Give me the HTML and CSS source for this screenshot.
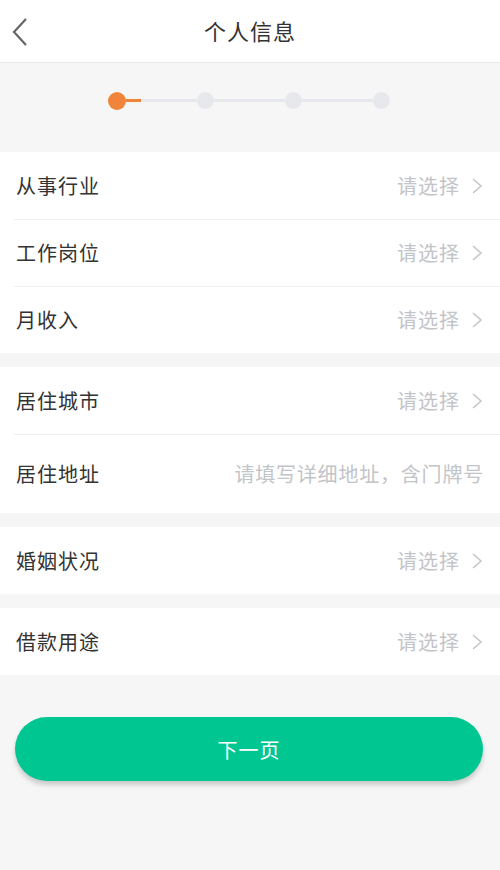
FILE: index.html
```html
<!DOCTYPE html>
<html lang="zh-CN">
<head>
<meta charset="utf-8">
<title>个人信息</title>
<link rel="stylesheet" href="styles.css">
</head>
<body>
<div class="page">
  <header class="topbar">
    <svg class="back" width="18" height="30" viewBox="0 0 18 30"><path d="M15 2 L3 15 L15 28" fill="none" stroke="#666" stroke-width="2.2"/></svg>
    <h1 class="title">个人信息</h1>
  </header>
  <div class="stepper">
    <div class="steps">
      <span class="dot active"></span>
      <span class="seg"><span class="seg-fill"></span></span>
      <span class="dot"></span>
      <span class="seg"></span>
      <span class="dot"></span>
      <span class="seg"></span>
      <span class="dot"></span>
    </div>
  </div>
  <section class="group">
    <div class="row"><span class="label">从事行业</span><span class="value">请选择<svg class="arrow" width="12" height="18" viewBox="0 0 12 18"><path d="M2 2 L10 9 L2 16" fill="none" stroke="#c4c6ca" stroke-width="1.6"/></svg></span></div>
    <div class="row"><span class="label">工作岗位</span><span class="value">请选择<svg class="arrow" width="12" height="18" viewBox="0 0 12 18"><path d="M2 2 L10 9 L2 16" fill="none" stroke="#c4c6ca" stroke-width="1.6"/></svg></span></div>
    <div class="row"><span class="label">月收入</span><span class="value">请选择<svg class="arrow" width="12" height="18" viewBox="0 0 12 18"><path d="M2 2 L10 9 L2 16" fill="none" stroke="#c4c6ca" stroke-width="1.6"/></svg></span></div>
  </section>
  <section class="group">
    <div class="row"><span class="label">居住城市</span><span class="value">请选择<svg class="arrow" width="12" height="18" viewBox="0 0 12 18"><path d="M2 2 L10 9 L2 16" fill="none" stroke="#c4c6ca" stroke-width="1.6"/></svg></span></div>
    <div class="row tall"><span class="label">居住地址</span><span class="value addr">请填写详细地址，含门牌号</span></div>
  </section>
  <section class="group">
    <div class="row"><span class="label">婚姻状况</span><span class="value">请选择<svg class="arrow" width="12" height="18" viewBox="0 0 12 18"><path d="M2 2 L10 9 L2 16" fill="none" stroke="#c4c6ca" stroke-width="1.6"/></svg></span></div>
  </section>
  <section class="group">
    <div class="row"><span class="label">借款用途</span><span class="value">请选择<svg class="arrow" width="12" height="18" viewBox="0 0 12 18"><path d="M2 2 L10 9 L2 16" fill="none" stroke="#c4c6ca" stroke-width="1.6"/></svg></span></div>
  </section>
  <div class="footer">
    <button class="next">下一页</button>
  </div>
</div>
</body>
</html>
```
FILE: styles.css
```css
* { box-sizing: border-box; }
html, body { margin: 0; padding: 0; }
body {
  width: 500px;
  height: 870px;
  background: #f6f6f6;
  font-family: "Noto Sans CJK SC", "Noto Sans", sans-serif;
  overflow: hidden;
}
.page {
  display: flex;
  flex-direction: column;
  height: 870px;
  background: #f6f6f6;
}
.topbar {
  height: 63px;
  background: #fff;
  border-bottom: 1px solid #e8e8e8;
  display: flex;
  align-items: center;
  justify-content: center;
  position: relative;
}
.back {
  position: absolute;
  left: 11px;
  top: 17px;
}
.title {
  margin: 0;
  font-size: 22px;
  font-weight: 400;
  color: #333;
  line-height: 1;
  letter-spacing: 1px;
  margin-top: -2px;
}
.stepper {
  height: 89px;
  display: flex;
  align-items: center;
  justify-content: center;
  padding-bottom: 14px;
}
.steps {
  display: flex;
  align-items: center;
  margin-left: -2px;
}
.dot {
  width: 17px;
  height: 17px;
  border-radius: 50%;
  background: #e6e8ec;
  flex: none;
}
.dot.active {
  width: 18px;
  height: 18px;
  background: #f0843a;
}
.seg {
  width: 71px;
  height: 3px;
  background: #e6e8ec;
  position: relative;
  flex: none;
}
.seg-fill {
  display: block;
  width: 15px;
  height: 3px;
  background: #f0843a;
}
.group {
  background: #fff;
  margin-bottom: 14px;
}
.row {
  height: 67px;
  display: flex;
  align-items: center;
  justify-content: space-between;
  padding: 0 17px 0 16px;
  position: relative;
}
.row + .row::before {
  content: "";
  position: absolute;
  left: 14px;
  right: 0;
  top: 0;
  height: 1px;
  background: #efefef;
}
.row.tall { height: 79px; }
.label {
  font-size: 20px;
  color: #333;
  letter-spacing: 1px;
}
.value {
  font-size: 20px;
  color: #c2c4c8;
  letter-spacing: 1px;
  display: flex;
  align-items: center;
  gap: 11px;
}
.value.addr {
  letter-spacing: 0.8px;
  margin-right: -1px;
}
.footer {
  flex: 1;
  padding: 28px 17px 0 15px;
}
.next {
  display: block;
  width: 100%;
  height: 64px;
  border: none;
  border-radius: 32px;
  background: #00c791;
  color: #fff;
  font-family: inherit;
  font-size: 20px;
  letter-spacing: 1px;
  box-shadow: 0 4px 5px rgba(0, 0, 0, 0.18);
}
```
